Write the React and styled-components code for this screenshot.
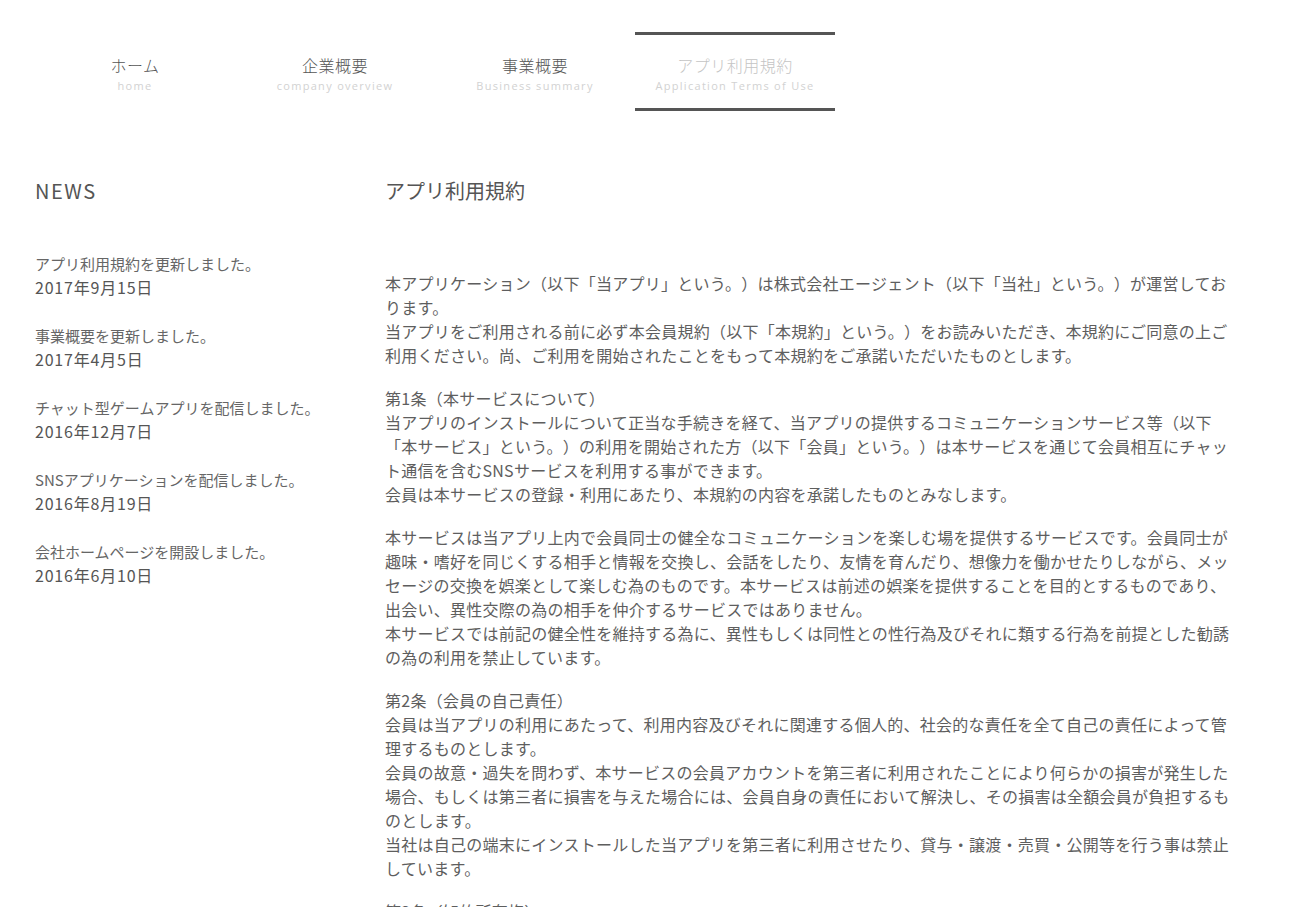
import React from "react";
import styled, { createGlobalStyle } from "styled-components";

const Global = createGlobalStyle`
  html, body { margin: 0; padding: 0; background: #fff; }
  body {
    font-family: "Noto Sans CJK JP", "Noto Sans", sans-serif;
    color: #5a5a5a;
    text-spacing-trim: space-all;
  }
  * { box-sizing: border-box; }
`;

const Page = styled.div`
  padding: 32px 35px 40px;
`;

const Nav = styled.nav`
  display: flex;
`;

const NavItem = styled.a`
  width: 200px;
  height: 79px;
  display: flex;
  flex-direction: column;
  align-items: center;
  padding-top: 19px;
  border-top: 3px solid ${(p) => (p.$active ? "#555" : "transparent")};
  border-bottom: 3px solid ${(p) => (p.$active ? "#555" : "transparent")};
  text-decoration: none;
  cursor: pointer;
`;

const NavJa = styled.span`
  font-size: 16px;
  line-height: 22px;
  font-weight: 300;
  letter-spacing: 0.5px;
  color: ${(p) => (p.$active ? "#c4c4c4" : "#555")};
`;

const NavEn = styled.span`
  margin-top: 3px;
  font-size: 11px;
  line-height: 14px;
  letter-spacing: 1.3px;
  color: #d2d2d2;
  font-family: "Open Sans", "Noto Sans", sans-serif;
`;

const Columns = styled.div`
  display: grid;
  grid-template-columns: 350px 850px;
  margin-top: 66px;
`;

const Heading = styled.h2`
  margin: 0;
  font-size: 20px;
  line-height: 28px;
  font-weight: 400;
  color: #555;
  letter-spacing: ${(p) => p.$spacing || "0"};
`;

const NewsList = styled.ul`
  list-style: none;
  margin: 47px 0 0;
  padding: 0;
  display: flex;
  flex-direction: column;
  gap: 25px;
`;

const NewsItem = styled.li`
  display: flex;
  flex-direction: column;
`;

const NewsText = styled.span`
  font-size: 15px;
  line-height: 24px;
  color: #666;
`;

const NewsDate = styled.span`
  font-size: 16px;
  line-height: 23px;
  letter-spacing: 0.8px;
  color: #555;
`;

const Body = styled.div`
  margin-top: 66px;
`;

const Para = styled.p`
  margin: 0 0 19px;
  font-size: 16px;
  line-height: 24px;
  letter-spacing: 0.25px;
  color: #5e5e5e;
`;

const news = [
  ["アプリ利用規約を更新しました。", "2017年9月15日"],
  ["事業概要を更新しました。", "2017年4月5日"],
  ["チャット型ゲームアプリを配信しました。", "2016年12月7日"],
  ["SNSアプリケーションを配信しました。", "2016年8月19日"],
  ["会社ホームページを開設しました。", "2016年6月10日"],
];

const navs = [
  ["ホーム", "home"],
  ["企業概要", "company overview"],
  ["事業概要", "Business summary"],
  ["アプリ利用規約", "Application Terms of Use", true],
];

export default function App() {
  return (
    <>
      <Global />
      <Page>
        <Nav>
          {navs.map(([ja, en, active]) => (
            <NavItem key={ja} $active={active}>
              <NavJa $active={active}>{ja}</NavJa>
              <NavEn>{en}</NavEn>
            </NavItem>
          ))}
        </Nav>
        <Columns>
          <aside>
            <Heading $spacing="1.5px">NEWS</Heading>
            <NewsList>
              {news.map(([t, d]) => (
                <NewsItem key={t}>
                  <NewsText>{t}</NewsText>
                  <NewsDate>{d}</NewsDate>
                </NewsItem>
              ))}
            </NewsList>
          </aside>
          <main>
            <Heading>アプリ利用規約</Heading>
            <Body>
              <Para>
                本アプリケーション（以下「当アプリ」という。）は株式会社エージェント（以下「当社」という。）が運営しております。
                <br />
                当アプリをご利用される前に必ず本会員規約（以下「本規約」という。）をお読みいただき、本規約にご同意の上ご利用ください。尚、ご利用を開始されたことをもって本規約をご承諾いただいたものとします。
              </Para>
              <Para>
                第1条（本サービスについて）
                <br />
                当アプリのインストールについて正当な手続きを経て、当アプリの提供するコミュニケーションサービス等（以下「本サービス」という。）の利用を開始された方（以下「会員」という。）は本サービスを通じて会員相互にチャット通信を含むSNSサービスを利用する事ができます。
                <br />
                会員は本サービスの登録・利用にあたり、本規約の内容を承諾したものとみなします。
              </Para>
              <Para>
                本サービスは当アプリ上内で会員同士の健全なコミュニケーションを楽しむ場を提供するサービスです。会員同士が趣味・嗜好を同じくする相手と情報を交換し、会話をしたり、友情を育んだり、想像力を働かせたりしながら、メッセージの交換を娯楽として楽しむ為のものです。本サービスは前述の娯楽を提供することを目的とするものであり、出会い、異性交際の為の相手を仲介するサービスではありません。
                <br />
                本サービスでは前記の健全性を維持する為に、異性もしくは同性との性行為及びそれに類する行為を前提とした勧誘の為の利用を禁止しています。
              </Para>
              <Para>
                第2条（会員の自己責任）
                <br />
                会員は当アプリの利用にあたって、利用内容及びそれに関連する個人的、社会的な責任を全て自己の責任によって管理するものとします。
                <br />
                会員の故意・過失を問わず、本サービスの会員アカウントを第三者に利用されたことにより何らかの損害が発生した場合、もしくは第三者に損害を与えた場合には、会員自身の責任において解決し、その損害は全額会員が負担するものとします。
                <br />
                当社は自己の端末にインストールした当アプリを第三者に利用させたり、貸与・譲渡・売買・公開等を行う事は禁止しています。
              </Para>
              <Para>
                第3条（知的所有権）
                <br />
                当アプリおよび本サービスに関する著作権、商標権その他一切の知的財産権は、当社または正当な権利者に帰属します。
              </Para>
            </Body>
          </main>
        </Columns>
      </Page>
    </>
  );
}
